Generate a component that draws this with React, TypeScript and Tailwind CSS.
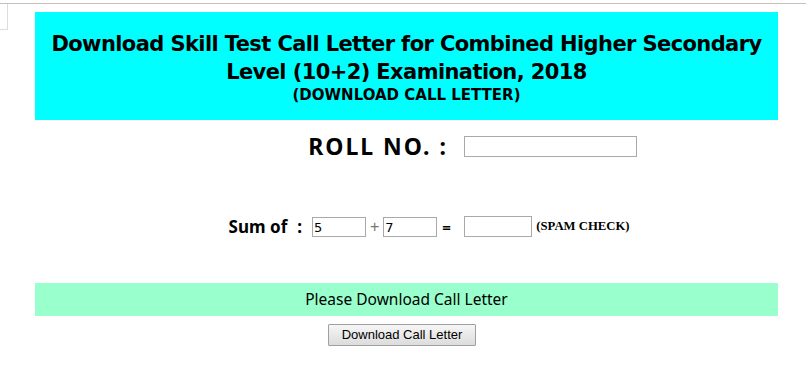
import React from "react";

export default function App() {
  return (
    <div className="relative w-[806px] h-[374px] bg-white overflow-hidden">
      <div className="h-[3px]" />
      <div className="border-t border-[#c8c0b8]" />
      <div className="absolute left-0 top-[4px] w-[8px] h-[26px] border-r border-b border-[#dcdcdc]" />
      <div className="ml-[35px] mt-[8px] w-[743px]">
        <div
          className="bg-[#00ffff] h-[108px] flex flex-col items-center pt-[18px] text-black text-center whitespace-nowrap"
          style={{ fontFamily: '"DejaVu Sans", sans-serif' }}
        >
          <div className="text-[21px] font-bold leading-[28px] tracking-[-0.6px]">
            Download Skill Test Call Letter for Combined Higher Secondary
            <br />
            Level (10+2) Examination, 2018
          </div>
          <div className="text-[15px] font-bold leading-[18px]">(DOWNLOAD CALL LETTER)</div>
        </div>

        <div
          className="flex items-center h-[50px] mt-[1px]"
          style={{ fontFamily: '"Comic Sans MS", "Noto Sans", sans-serif' }}
        >
          <div className="w-[429px] text-right text-[23px] font-bold pr-[16px] tracking-[2px]">
            ROLL NO. :
          </div>
          <input
            className="w-[173px] h-[21px] border border-[#a9a9a9] bg-white outline-none"
            type="text"
          />
        </div>

        <div
          className="flex items-center h-[38px] mt-[37px]"
          style={{ fontFamily: '"Comic Sans MS", "Noto Sans", sans-serif' }}
        >
          <div className="w-[277px] flex justify-end items-center text-[17px] font-bold">
            <span>Sum of</span>
            <span className="ml-[10px] mr-[10px]">:</span>
          </div>
          <input
            defaultValue="5"
            className="w-[54px] h-[20px] border border-[#a9a9a9] text-[13px] px-[1px] outline-none"
            style={{ fontFamily: '"DejaVu Sans", sans-serif' }}
          />
          <span
            className="mx-[4px] text-[16px] text-[#777] leading-none"
            style={{ fontFamily: '"Liberation Sans", sans-serif' }}
          >
            +
          </span>
          <input
            defaultValue="7"
            className="w-[54px] h-[20px] border border-[#a9a9a9] text-[13px] px-[1px] outline-none"
            style={{ fontFamily: '"DejaVu Sans", sans-serif' }}
          />
          <span className="ml-[5px] w-[22px] text-[15px] font-bold">=</span>
          <input className="w-[68px] h-[21px] border border-[#a9a9a9] outline-none mb-[2px]" />
          <span
            className="ml-[4px] text-[12.7px] font-bold"
            style={{ fontFamily: '"Liberation Serif", serif' }}
          >
            (SPAM CHECK)
          </span>
        </div>

        <div
          className="mt-[37px] h-[33px] bg-[#99ffcc] flex items-center justify-center text-[15.5px]"
          style={{ fontFamily: '"Comic Sans MS", "Noto Sans", sans-serif' }}
        >
          Please Download Call Letter
        </div>

        <div className="flex justify-center mt-[8px]">
          <button
            className="w-[148px] h-[22px] border border-[#a0a0a0] bg-gradient-to-b from-[#f6f6f6] to-[#dcdcdc] text-[13px] text-black rounded-[1px] ml-[-9px]"
            style={{ fontFamily: '"Liberation Sans", sans-serif' }}
          >
            Download Call Letter
          </button>
        </div>
      </div>
    </div>
  );
}
